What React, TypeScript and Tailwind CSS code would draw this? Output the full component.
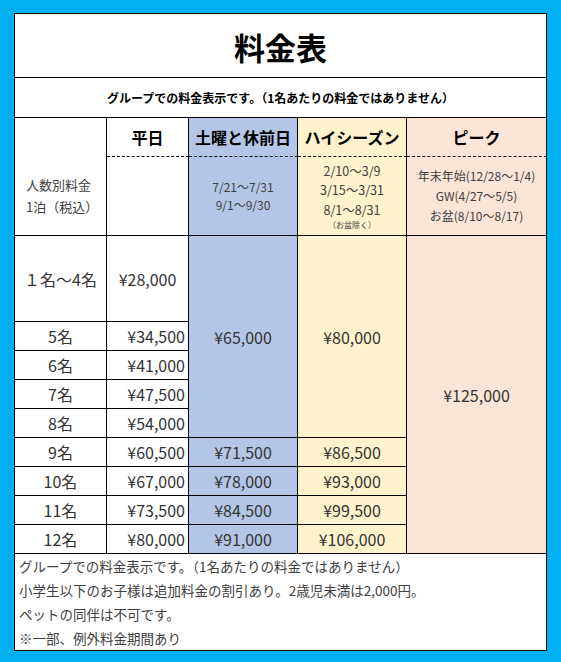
import React from "react";

const font = { fontFamily: '"Noto Sans CJK JP", "Noto Sans", sans-serif' };

const cell = "border-r border-b border-black flex items-center justify-center";

const smallRows = [
  { name: "5名", weekday: "¥34,500" },
  { name: "6名", weekday: "¥41,000" },
  { name: "7名", weekday: "¥47,500" },
  { name: "8名", weekday: "¥54,000" },
];

const bigRows = [
  { name: "9名", weekday: "¥60,500", sat: "¥71,500", high: "¥86,500" },
  { name: "10名", weekday: "¥67,000", sat: "¥78,000", high: "¥93,000" },
  { name: "11名", weekday: "¥73,500", sat: "¥84,500", high: "¥99,500" },
  { name: "12名", weekday: "¥80,000", sat: "¥91,000", high: "¥106,000" },
];

const notes = [
  "グループでの料金表示です。（1名あたりの料金ではありません）",
  "小学生以下のお子様は追加料金の割引あり。2歳児未満は2,000円。",
  "ペットの同伴は不可です。",
  "※一部、例外料金期間あり",
];

export default function App() {
  return (
    <div className="w-[561px] h-[662px] bg-[#00b0f0] pt-[13px] pl-[14px]" style={font}>
      <div className="w-[533px] grid grid-cols-[92px_82px_109px_109px_140px] grid-rows-[64px_40px_39px_79px_86px_repeat(8,29px)_97px] border-l border-t border-black bg-white text-[#333]">
        {/* title */}
        <div className={`${cell} col-span-5 text-[31px] font-bold text-black pt-[4px]`}>料金表</div>
        <div className={`${cell} col-span-5 text-[12px] font-bold text-black`}>
          グループでの料金表示です。（1名あたりの料金ではありません）
        </div>

        {/* header */}
        <div className="row-span-2 border-r border-b border-black flex flex-col justify-center pl-[11px] pt-[39px] text-[13px] leading-[22px] text-[#404040]">
          <span>人数別料金</span>
          <span>1泊（税込）</span>
        </div>
        <div className={`${cell} [border-bottom-style:dashed] text-[16px] font-bold text-black`}>平日</div>
        <div className={`${cell} [border-bottom-style:dashed] bg-[#b4c6e7] text-[16px] font-bold text-black`}>土曜と休前日</div>
        <div className={`${cell} [border-bottom-style:dashed] bg-[#fff2cc] text-[16px] font-bold text-black`}>ハイシーズン</div>
        <div className={`${cell} [border-bottom-style:dashed] bg-[#fce4d6] text-[16px] font-bold text-black`}>ピーク</div>

        {/* season dates */}
        <div className="border-r border-b border-black" />
        <div className={`${cell} flex-col bg-[#b4c6e7] text-[12px] leading-[18px] text-[#404040]`}>
          <span>7/21～7/31</span>
          <span>9/1～9/30</span>
        </div>
        <div className={`${cell} flex-col bg-[#fff2cc] text-[12.5px] leading-[19.5px] text-[#404040]`}>
          <span>2/10～3/9</span>
          <span>3/15～3/31</span>
          <span>8/1～8/31</span>
          <span className="text-[8px] leading-[12px]">（お盆除く）</span>
        </div>
        <div className={`${cell} flex-col bg-[#fce4d6] text-[12px] leading-[20px] text-[#404040]`}>
          <span>年末年始(12/28～1/4)</span>
          <span>GW(4/27～5/5)</span>
          <span>お盆(8/10～8/17)</span>
        </div>

        {/* 1-4 */}
        <div className={`${cell} text-[16px]`}>１名～4名</div>
        <div className={`${cell} text-[16px]`}>¥28,000</div>
        <div className={`${cell} row-span-5 bg-[#b4c6e7] text-[16px]`}>¥65,000</div>
        <div className={`${cell} row-span-5 bg-[#fff2cc] text-[16px]`}>¥80,000</div>
        <div className={`${cell} row-span-9 bg-[#fce4d6] text-[16px]`}>¥125,000</div>

        {smallRows.map((r) => (
          <React.Fragment key={r.name}>
            <div className={`${cell} text-[16px]`}>{r.name}</div>
            <div className="border-r border-b border-black flex items-center justify-end pr-[3px] text-[16px]">{r.weekday}</div>
          </React.Fragment>
        ))}

        {bigRows.map((r) => (
          <React.Fragment key={r.name}>
            <div className={`${cell} text-[16px]`}>{r.name}</div>
            <div className="border-r border-b border-black flex items-center justify-end pr-[3px] text-[16px]">{r.weekday}</div>
            <div className={`${cell} bg-[#b4c6e7] text-[16px]`}>{r.sat}</div>
            <div className={`${cell} bg-[#fff2cc] text-[16px]`}>{r.high}</div>
          </React.Fragment>
        ))}

        {/* notes */}
        <div className="col-span-5 border-r border-b border-black flex flex-col pl-[4px] text-[13.5px] leading-[24px] text-[#404040]">
          {notes.map((n) => (
            <span key={n}>{n}</span>
          ))}
        </div>
      </div>
    </div>
  );
}
